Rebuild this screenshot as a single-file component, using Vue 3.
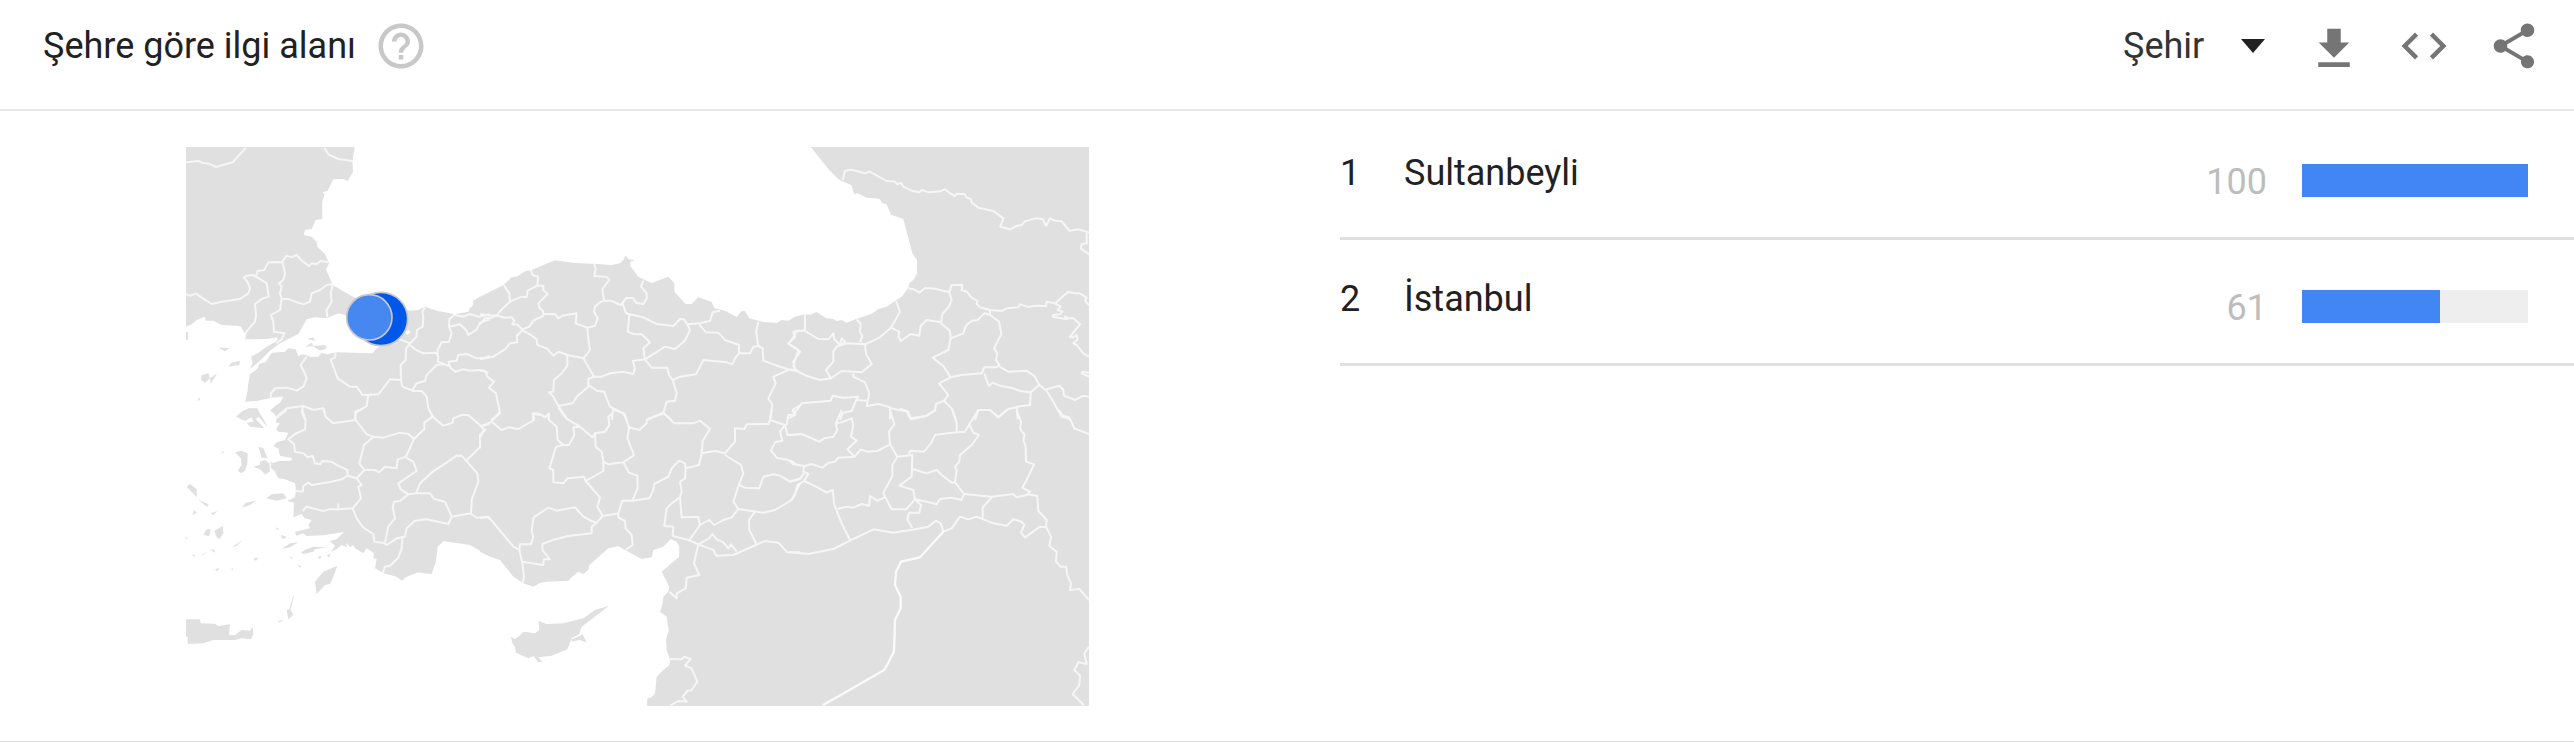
<script setup>
import { ref } from 'vue'

const level = ref('city')

const cities = [
  { name: 'Sultanbeyli', value: 100 },
  { name: 'İstanbul', value: 61 },
]

const blackSea =
  'M555,45 547,95 549,125 533,153 520,147 490,148 473,182 458,187 463,193 457,215 457,267 437,270 425,297 405,300 401,315 425,320 440,335 442,350 465,372 477,400 468,418 488,465 530,490 555,503 640,520 720,542 745,540 765,530 800,542 855,553 895,545 900,535 908,527 910,512 930,500 1002,464 1025,442 1040,440 1065,424 1085,420 1120,405 1155,391 1215,399 1270,401 1325,405 1350,400 1360,390 1366,377 1377,388 1395,390 1381,396 1381,408 1405,440 1420,448 1445,459 1495,440 1513,460 1513,485 1547,522 1565,522 1585,501 1625,516 1633,535 1665,542 1700,561 1715,543 1725,543 1738,565 1780,576 1820,579 1835,570 1855,572 1875,560 1905,553 1922,554 1940,546 1968,564 1990,567 2000,573 2015,570 2030,578 2060,566 2105,551 2125,537 2150,530 2178,511 2195,500 2215,473 2218,460 2232,448 2241,430 2241,390 2227,370 2200,267 2163,254 2150,223 2137,220 2128,206 2090,203 2063,190 2052,192 2044,165 2008,150 1978,121 1918,45Z'

// Each sheet of the map is drawn in its own local coordinates.
const sheet = (dx, dy, pts) =>
  pts.split(' ').map((p) => {
    const [x, y] = p.split(',').map(Number)
    return `${x + dx},${y + dy}`
  }).join(' ')

const southSea =
  'M' + sheet(0, 0, '40,595 48,590 65,583 80,570 104,560 108,572 130,572 155,585 200,587 213,590 222,607 230,610 225,628 290,627 322,622 322,632 290,650 265,668 243,680 248,698 240,716 262,700 300,662 330,640 385,612 410,568 435,562 470,565 505,550 545,560 600,600 650,640 620,655 608,670 500,667 470,673 455,668 445,680 420,680 400,673 385,678 377,658 355,655 345,665 305,668 288,695 268,702 262,716 240,733 235,760 232,785 226,815 260,813 305,803 340,800 330,818 315,828 300,842') +
  ' ' + sheet(0, 840, '312,10 320,25 318,38 330,40 318,58 325,65 355,68 345,90 320,97 310,108 325,115 330,138 365,143 365,152 330,153 305,160 315,185 325,205 345,208 375,220 378,240 375,262 352,272 372,278 370,322 395,312 403,325 425,330 415,345 420,355 375,365 378,377 400,370 410,378 460,376 522,366 500,388 480,393 495,407 483,425 500,418 515,405 530,412 530,398 540,412 550,405 555,415 580,430 590,415 612,430 610,445 620,447 615,475 640,490 680,500 695,512 710,500 745,487 785,493 792,470 797,460 803,410 820,394 865,400 900,405 930,422') +
  ' ' + sheet(930, 840, '0,425 30,440 60,450 100,500 130,520 160,530 180,519 200,515 265,512 272,505 295,485 310,492 325,480 328,465 385,415 415,408 435,420 485,447 515,442 520,420 550,410 572,388 590,395 598,410 597,440 545,485 568,530 565,545 550,560 548,580 540,605 560,620 566,660 558,690 560,720 570,750 568,765 550,780 530,800 525,850 515,862 502,865 500,900') +
  ' 40,1740Z'

const sheets = [
  {
    x: 0, y: 0,
    islands: [
      '48,605 55,608 53,630 48,630', '145,652 178,655 165,664', '175,710 185,698 210,692 208,705',
      '95,735 115,730 120,745 105,758 93,750', '120,745 142,730 122,762', '412,628 430,622 435,632',
      '405,650 425,638 430,648', '428,648 465,645 470,655 450,662', '82,812 88,802 90,810',
    ],
    borders: [
      '48,97 85,93 98,99 117,101 138,111 188,97 228,53', '463,53 475,73 505,87 547,93',
      '48,493 62,497 78,490 95,503 125,522 155,515 190,510 210,507 235,490 240,475 232,455 222,443 230,437 248,435 270,447 290,460 296,500 275,507 255,522 258,555 255,575 228,607',
      '258,440 262,423 283,420 295,397 335,397 350,377 365,382 380,375 395,392 417,408 425,400 440,403 452,393 475,397',
      '338,397 345,430 340,450 327,460 335,470 330,490 335,507 330,540 303,555 310,575 312,605 343,610 335,628 320,640',
      '335,507 355,507 370,513 400,523 420,515 425,490 450,480 470,465 488,462', '488,465 482,490 485,515 470,540 472,562',
      '410,680 392,705 402,725 410,745 400,770 380,782 350,773 315,775 303,790 302,803',
      '313,866 350,835 400,828 430,840 460,835 465,850', '400,828 395,845 405,870',
      '497,668 495,683 482,688 503,745 540,770 560,770 578,795 625,793 660,748 693,750 697,770 730,783 755,783 770,800 775,835 790,860',
      '693,750 692,705 707,690 708,655 720,640 690,628 660,615', '720,640 740,620 740,600 758,590 760,560 757,545 765,533',
      '720,645 735,658 760,670 800,668 805,680 803,695 825,703',
      '803,680 803,660 815,637 837,635 845,610 837,590 838,568 855,553',
      '838,590 870,583 888,600 895,615 920,598 930,578 960,568', '855,555 880,560 900,552 925,560 960,553',
      '725,783 740,760 765,753 770,735 800,705 825,703 840,710 835,695 860,692 865,675 890,672 920,685 945,683 960,678',
      '840,712 855,725 880,718 900,722 930,720 955,728', '595,795 590,828 558,848 555,870',
    ],
  },
  {
    x: 930, y: 0, islands: [],
    borders: [
      '0,553 50,558 63,540 90,515 88,490 72,466', '0,583 15,565 35,563 48,556 75,563 95,562 103,572 97,583 112,583 128,600',
      '90,515 125,500 140,502 143,482 172,467 190,467 190,480 203,492 175,520 178,533 190,545 190,557 160,572 148,590 128,598',
      '172,467 175,440 158,435 152,420',
      '190,553 225,552 235,565 248,557 290,550 287,580 322,593 345,587 353,565 342,545 345,530 358,518 372,512 367,477 388,450 380,440 343,438 347,415 342,402',
      '372,512 395,513 422,525 440,503 460,505 468,518 490,522 500,505 500,490 483,470 490,452',
      '428,520 437,548 448,553 490,562 530,582 580,588 600,567 612,568 622,583 658,580 690,573 698,547 720,542',
      '437,548 448,555 443,605 460,612 485,613 510,637 490,655 495,688', '622,583 630,600 615,632 585,657 555,650 495,688',
      '128,600 110,618 112,637 90,640 75,658 40,680 0,688',
      '128,602 150,613 170,628 172,645 200,655 220,677 235,665 262,675 310,685 330,660 325,630 322,593',
      '262,675 262,707 245,730 222,750 220,785 207,787 220,800 235,828 278,820 290,800 328,767',
      '310,685 342,740 325,747 325,765 350,782 372,785 390,830 400,835 395,870',
      '342,740 365,740 390,730 430,725 460,732 465,715 458,693 495,688',
      '495,688 515,713 562,713 567,735 578,750 590,790 585,812 560,815 550,850 500,868',
      '578,750 600,740 648,733 670,690 740,697 757,703 765,685 777,670 777,645 735,630 715,608 678,607 658,583',
      '777,670 795,670 810,670 820,650 835,648 828,605 835,575', '835,648 848,655 850,692 885,705 925,718 955,722',
      '925,720 880,740 887,760 865,805 877,825 870,870', '960,600 940,605 945,622 925,640 955,660 945,690 940,708 950,722',
      '235,828 262,868', '400,835 430,850 440,870', '550,850 575,870',
      '0,722 15,722 22,740 42,755 27,773 48,790 60,850 33,870', '160,870 158,850 180,852 195,862 207,850 205,870',
      '960,825 938,840 945,855 925,865',
    ],
  },
  {
    x: 1860, y: 0, islands: [],
    borders: [
      '158,150 165,122 185,119 225,130 238,124 290,153 315,155 322,163 333,158 340,170 365,182 388,187 395,180 418,187 450,184 465,178 480,190 495,198 500,191 525,193 530,203 542,207 545,218 565,233 610,243 640,265 631,290 660,298 680,288 695,285 705,274 735,265 758,267 768,288 780,265 795,272 815,274 838,302 865,298 897,308',
      '890,310 890,340 875,343 872,355 897,373',
      '355,475 372,478 388,488 405,474 435,476 478,487 485,465 517,464 515,480 530,485 545,503 563,513 560,522 570,532 600,540 635,543 650,535 685,532 690,523 712,530 740,527 768,528 770,515 795,520 835,485 855,490 870,490 890,503 885,513 897,525',
      '795,520 812,530 803,540 818,545 810,553 790,555 788,560 815,565 830,568 825,560 835,565 850,565 870,583 840,620 850,622 860,615 863,628 850,640 860,645 880,670 897,680',
      '478,487 485,510 477,530 457,552 453,580 480,603 482,625 475,660 428,683 460,708 482,742 447,760 475,795 462,812 438,822 435,840 410,857 363,868 355,845 302,835',
      '482,625 520,610 527,588 545,572 563,570 583,550 600,555 600,540',
      '600,555 627,575 634,612 612,655 622,670 618,690 628,705 620,712 583,712 575,730 515,735 482,742',
      '628,710 655,725 710,722 735,740 748,765 770,783', '583,730 590,750 597,768 607,758 630,767 670,775 690,783 722,787 748,765',
      '770,778 808,767 820,780 822,797 855,810 880,797 897,800', '770,783 790,815 815,860 840,868',
      '722,787 720,825 680,830 683,868', '897,740 875,730 878,725 897,728',
      '318,513 330,545 303,593 268,623 225,643', '303,593 328,605 325,618 332,633 362,612 388,617 392,588 410,570 453,577',
      '225,643 228,672 245,702 215,727 155,723 122,745 108,720 130,695 130,665 140,650 170,640 225,643',
      '45,553 45,603 85,627 115,628 130,610 133,628 150,645 155,625 165,635 152,645',
      '200,568 212,582 210,605 217,618 210,637', '45,600 20,605 0,637', '0,645 30,665 10,695 15,720 50,738 90,750 122,745',
      '0,720 18,722', '190,730 190,740 225,757 238,790 230,828 265,822 300,832 300,868',
      '230,812 198,810 205,800 160,803 128,797 122,812 35,820 10,855', '198,812 185,843 158,848 150,870',
      '462,812 485,835 498,870', '555,870 565,840 600,840 625,862 655,837 680,832',
    ],
  },
  {
    x: 0, y: 840,
    islands: [
      '198,20 215,5 235,-5 262,-5 268,8 285,35 292,50 265,20 258,28 283,55 240,50 230,38 250,35 245,22 225,33',
      '195,127 215,122 233,130 232,160 225,183 213,190 203,182 215,165 213,145', '265,110 280,115 293,145 275,143',
      '250,170 270,165 270,155 285,150 298,160 300,185 285,193 270,178', '302,150 318,185 303,175', '155,122 162,126 158,132',
      '50,230 60,222 80,238 80,262', '85,270 115,282 112,291', '215,293 228,278 258,272 240,285',
      '288,265 305,253 340,250 350,265 320,272', '68,315 72,300 80,308', '122,310 142,303 130,315',
      '100,375 110,358 122,358 118,378', '133,362 158,348 160,370 148,388 138,378', '187,410 218,390 200,408',
      '335,418 360,400 385,397 360,412', '120,418 135,420 133,428', '333,375 350,380 338,388', '318,352 327,357 320,360',
      '393,427 410,418 430,410 470,412 435,418 430,425 400,432', '443,440 455,437 450,448', '470,438 482,430 478,442',
      '250,445 265,443 258,453', '382,462 396,472 388,472', '360,442 368,441 365,447', '134,478 148,474 142,484',
      '92,437 112,426 100,436', '64,432 77,437 72,440', '183,477 190,475 187,482', '48,380 53,383 50,390',
      '435,515 460,485 502,467 490,500 480,522 465,525 440,553', '350,600 360,597 370,615 355,628',
      '370,556 371,562 361,602 357,600', '322,635 342,627 330,637',
      '48,628 90,628 92,640 135,641 145,648 180,643 177,675 195,675 215,660 240,662 248,650 250,672 243,688 215,685 195,690 130,690 100,700 53,702 53,680 48,680',
    ],
    borders: [
      '318,25 350,0',
      '397,0 407,30 405,58 375,72 355,88 372,103 375,125 400,130 413,142 428,138 435,160 450,163 457,153 483,155 510,170 532,180 533,197 560,205 583,180 568,160 582,105 610,80 590,73 557,30 555,5 580,-5',
      '460,-5 467,20 490,40 557,30', '610,80 640,83 690,68 715,72 732,87 708,140 683,148 680,175 645,170 628,187 615,180 583,180',
      '732,87 763,57 763,38 788,20 777,0',
      '788,20 820,47 848,38 850,25 875,15 895,15 935,50 942,60 930,85 930,112 888,152 875,137 860,137 830,158 788,185 750,220 738,250 780,250 792,267 825,275 845,320 835,342 770,328 735,332 710,355 705,380 680,385 650,405 640,398',
      '935,50 960,40', '708,143 730,155 740,183 685,220 692,238 715,253 738,250',
      '715,253 690,273 672,275 668,292 675,325 655,350 645,398', '888,152 922,190 925,215 905,270 903,310 845,320',
      '903,312 920,323 955,322 960,328', '378,243 398,245 400,228 415,218 425,225 485,215 515,208 533,197',
      '560,205 575,225 565,230 573,265 548,295 505,298 505,283 505,298 480,297 460,303 440,298 410,290 398,303',
      '548,295 560,325 580,353 610,372 613,395 640,398', '697,383 695,415 685,443 660,467 645,470 638,490',
    ],
  },
  {
    x: 930, y: 840,
    islands: [
      '93,680 105,687 118,678 130,665 165,670 178,660 175,633 200,642 250,640 310,625 345,600 387,587 325,635 305,650 298,672 275,685 262,718 215,737 175,742 187,755 175,757 160,738 145,745 108,728 105,712 97,700',
      '275,688 300,678 307,672 320,697 298,690 275,695',
    ],
    borders: [
      '18,57 0,75 0,115', '0,50 35,35 60,5',
      '35,35 65,60 85,52 115,57 162,30 160,12 185,15 195,22 207,12 207,30 230,50 233,90 250,105 267,105 283,75 280,52 300,50 337,82 345,70',
      '235,-8 258,25 300,50',
      '250,105 228,110 208,175 220,180 220,217 250,220 262,205 312,200 317,213 370,183 370,155 365,125 347,110 345,70 375,65 388,45 385,20 400,8',
      '402,0 433,10 447,52 442,85 462,135 430,157 385,163 370,155',
      '447,52 478,60 500,40 500,30 550,8 583,40 640,40 660,32 690,57 668,92 665,130 657,165 617,175 615,205 600,215',
      '665,130 705,123 735,130 765,95 765,55 793,57 800,43 865,42 870,30 875,0', '735,135 783,165 790,190 778,220 760,275 775,297',
      '778,225 795,233 838,235 850,200 880,193 900,197 930,215 960,205',
      '430,157 447,188 472,197 473,235 457,272 508,265 520,240 523,222 565,200 575,175 597,152 615,160 617,175',
      '600,215 605,245 600,262 575,280 560,295 553,348 580,350 578,378', '600,262 605,322 655,320 660,345 628,390',
      '660,345 687,330 703,345 730,330 755,322 775,297 850,308 885,300 935,270 945,250 960,220',
      '825,305 807,330 808,360 830,403', '317,213 360,262 352,290 368,318 415,310 427,272 457,272',
      '368,318 350,338 335,333 310,320 285,292 230,302 205,293 160,323 155,365 160,380 153,403 120,403 118,420',
      '350,338 335,350 335,370 265,378 218,390 187,402 188,422 210,448 192,447 190,465 125,455',
      '0,323 25,320 100,410 118,420 128,465 132,500 128,520', '415,310 415,322 435,333 437,355 455,375 458,405 437,420',
      '578,378 625,390 655,403 700,420 708,437 760,435 855,393 895,398 922,427 960,427',
      '655,403 687,385 697,372 710,388 730,397 745,415 753,403 770,425', '655,403 642,460 658,495 620,503 617,535 590,550 590,565 568,545',
      '570,747 605,748 612,740 632,747 615,767 635,775 652,815 635,840 622,843 608,860 620,875 595,873 570,887',
      '870,30 915,45 900,65 907,92 885,97 873,122 890,143 925,150 940,163 960,165', '915,45 922,75 960,73', '940,0 945,15 925,15 920,45',
    ],
  },
  {
    x: 1860, y: 840, islands: [],
    borders: [
      '0,427 55,432 130,417 180,392 250,358 310,368 375,358 415,350 437,332 452,340 460,365 485,355 510,320 535,328 560,320 610,340 650,347 670,328 695,335 703,345 693,368 705,382 750,350 768,352',
      '0,75 35,72 88,95 103,85 130,80 142,60 137,42 155,0',
      '137,42 160,35 185,25 190,45 183,80 200,92 172,118 195,140 145,143 135,155 115,158 97,173 65,162 45,168 22,165 0,150',
      '195,140 212,118 230,125 262,123 300,103 297,65 313,43 300,0',
      '300,103 322,140 307,165 307,198 280,250 305,298 348,298 375,268 370,240 328,227 365,200 367,135 322,140',
      '355,132 362,122 402,125 425,97 435,75 485,68 525,65 538,43 565,0', '500,65 500,40 487,0',
      '538,43 550,68 567,75 545,105 510,135 508,155 495,170 500,180 495,215',
      '367,177 410,190 440,180 455,195 485,218 495,217 522,252 515,270 485,263 450,267 440,283 410,275 375,268',
      '522,252 605,260 670,252 680,262 710,255 720,245 697,233 710,210 732,163 708,155 707,110 700,90 704,75 690,55 693,35 680,0',
      '605,262 578,293 578,325',
      '710,252 742,258 745,303 770,330 768,350 783,380 778,408 800,425 798,455 812,470 828,470 832,495 843,520 840,540 868,537 897,570',
      '375,268 393,285 388,308 357,308 352,328 367,355', '285,262 262,272 240,258 238,287 215,282 190,293 170,290 143,297',
      '42,213 78,230 110,248 128,240 133,285 155,340 180,390', '42,168 40,185 55,192 42,213 22,225 15,255 0,275',
      '0,215 30,207 42,190', '330,-4 350,3 360,25 410,18 438,0', '600,0 625,22 650,0', '807,0 820,18 838,22 853,55 897,72',
      '897,710 883,730 890,762 865,757 853,780 870,797 868,825 848,852 882,886',
    ],
  },
]
</script>

<template>
  <section class="widget">
    <header class="head">
      <h2 class="title">Şehre göre ilgi alanı</h2>
      <button class="icon-btn help" type="button" aria-label="Yardım">
        <svg viewBox="0 0 24 24"><path d="M11 18h2v-2h-2v2zm1-16C6.48 2 2 6.48 2 12s4.48 10 10 10 10-4.48 10-10S17.52 2 12 2zm0 18c-4.41 0-8-3.59-8-8s3.59-8 8-8 8 3.59 8 8-3.59 8-8 8zm0-14c-2.21 0-4 1.79-4 4h2c0-1.1.9-2 2-2s2 .9 2 2c0 2-3 1.75-3 5h2c0-2.25 3-2.5 3-5 0-2.21-1.79-4-4-4z" /></svg>
      </button>
      <div class="actions">
        <div class="picker">
          <select v-model="level" aria-label="Çözünürlük">
            <option value="city">Şehir</option>
          </select>
          <svg class="caret" viewBox="0 0 24 14"><path d="M0 0h24L12 14z" /></svg>
        </div>
        <button class="icon-btn" type="button" aria-label="İndir">
          <svg viewBox="0 0 24 24"><path d="M18.8 10.4H15V4.3H9v6.1H5.2l6.8 6.8zM5 19.2v2.1h14v-2.1z" /></svg>
        </button>
        <button class="icon-btn" type="button" aria-label="Yerleştir">
          <svg viewBox="0 0 24 24"><path d="M9.4 16.6 4.8 12l4.6-4.6L8 6l-6 6 6 6zm5.2 0 4.6-4.6-4.6-4.6L16 6l6 6-6 6z" /></svg>
        </button>
        <button class="icon-btn" type="button" aria-label="Paylaş">
          <svg viewBox="0 0 24 24"><path d="M18 16.08c-.76 0-1.44.3-1.96.77L8.91 12.7c.05-.23.09-.46.09-.7s-.04-.47-.09-.7l7.05-4.11c.54.5 1.25.81 2.04.81 1.66 0 3-1.34 3-3s-1.34-3-3-3-3 1.34-3 3c0 .24.04.47.09.7L8.04 9.81C7.5 9.31 6.79 9 6 9c-1.66 0-3 1.34-3 3s1.34 3 3 3c.79 0 1.5-.31 2.04-.81l7.12 4.16c-.05.21-.08.43-.08.65 0 1.61 1.31 2.92 2.92 2.92s2.92-1.31 2.92-2.92-1.31-2.92-2.92-2.92z" /></svg>
        </button>
      </div>
    </header>

    <div class="body">
      <div class="map-pane">
        <svg class="map" viewBox="48 51 2709 1677" role="img" aria-label="Türkiye haritası">
          <rect class="land" x="48" y="51" width="2709" height="1677" />
          <g v-for="(s, i) in sheets" :key="i" :transform="`translate(${s.x} ${s.y})`">
            <polyline v-for="(b, j) in s.borders" :key="j" class="border" :points="b" />
          </g>
          <polyline class="border wide" points="2320,1205 2250,1282 2193,1295 2178,1325 2175,1365 2192,1400 2192,1435 2175,1470 2172,1565 2143,1620 1958,1726" />
          <path class="sea" :d="blackSea" />
          <path class="sea" :d="southSea" />
          <path class="sea" d="M705 602l12-2 5 8-12 6z" />
          <g v-for="(s, i) in sheets" :key="'i' + i" :transform="`translate(${s.x} ${s.y})`">
            <polygon v-for="(p, j) in s.islands" :key="j" class="land" :points="p" />
          </g>
          <circle class="dot strong" cx="633" cy="567" r="80" />
          <circle class="dot soft" cx="598" cy="562" r="68" />
        </svg>
      </div>

      <ol class="list">
        <li v-for="(c, i) in cities" :key="c.name" class="row">
          <span class="rank">{{ i + 1 }}</span>
          <span class="name">{{ c.name }}</span>
          <span class="value">{{ c.value }}</span>
          <span class="track"><span class="fill" :style="{ width: c.value + '%' }"></span></span>
        </li>
      </ol>
    </div>
  </section>
</template>

<style>
body {
  margin: 0;
  background: #fff;
}
</style>

<style scoped>
.widget {
  font-family: Roboto, sans-serif;
  font-size: 36px;
  line-height: 42px;
  color: #212121;
  border-bottom: 1px solid #e0e0e0;
}
.head {
  display: flex;
  align-items: center;
  box-sizing: border-box;
  height: 111px;
  padding: 0 33px 18px 43px;
  border-bottom: 2px solid #e6e6e6;
}
.title {
  margin: 0;
  font-size: 36px;
  font-weight: 400;
}
.icon-btn {
  display: block;
  width: 54px;
  height: 54px;
  padding: 0;
  border: 0;
  background: none;
  color: #757575;
}
.icon-btn svg {
  display: block;
  width: 100%;
  fill: currentColor;
}
.help {
  margin-left: 18px;
  color: #c8c8c8;
}
.actions {
  display: flex;
  align-items: center;
  gap: 36px;
  margin-left: auto;
}
.picker {
  position: relative;
}
.picker select {
  display: block;
  width: 148px;
  margin: 0;
  padding: 0;
  border: 0;
  appearance: none;
  background: none;
  color: #333;
  font: inherit;
}
.caret {
  position: absolute;
  right: 6px;
  top: 50%;
  width: 24px;
  height: 14px;
  margin-top: -7px;
  fill: #212121;
  pointer-events: none;
}
.body {
  display: grid;
  grid-template-columns: 1fr 1fr;
}
.map-pane {
  padding: 36px 198px 35px 186px;
}
.map {
  display: block;
  width: 100%;
}
.land {
  fill: #e0e0e0;
}
.sea {
  fill: #fff;
}
.border {
  fill: none;
  stroke: #f6f6f6;
  stroke-width: 6;
  stroke-linejoin: round;
}
.wide {
  stroke: #fafafa;
  stroke-width: 7;
}
.dot {
  stroke: #c8c8c8;
  stroke-width: 5;
}
.strong {
  fill: #0058eb;
}
.soft {
  fill: #4787f0;
}
.list {
  list-style: none;
  margin: 3px 0 0 53px;
  padding: 0;
}
.row {
  display: flex;
  align-items: flex-start;
  height: 72px;
  padding: 38px 46px 13px 0;
  border-bottom: 3px solid #e0e0e0;
}
.rank {
  width: 64px;
}
.name {
  flex: 1;
}
.value {
  margin: 9px 35px 0 0;
  color: #bdbdbd;
}
.track {
  width: 226px;
  height: 33px;
  margin-top: 12px;
  background: #eee;
}
.fill {
  display: block;
  height: 100%;
  background: #4285f4;
}
</style>
